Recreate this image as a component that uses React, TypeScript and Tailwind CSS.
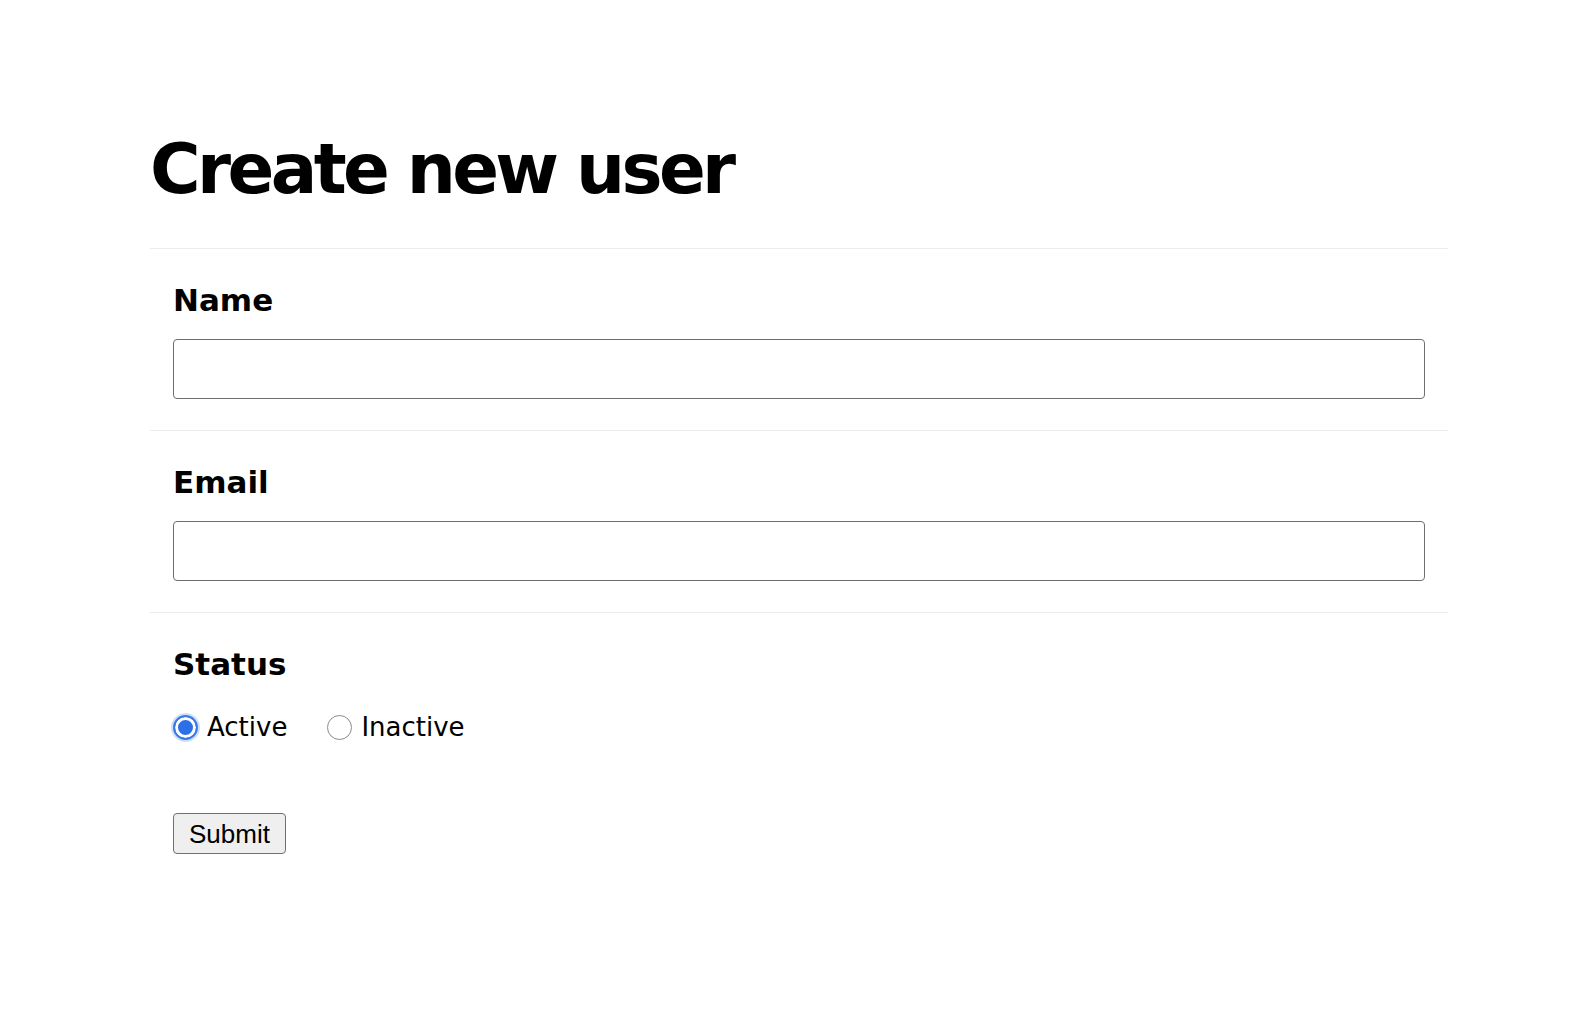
import React, { useState } from 'react';

const font = "font-['DejaVu_Sans','Verdana',sans-serif]";

const Field = ({ label, id }: { label: string; id: string }) => (
  <div className="border-t border-[#ececec] px-[23px] pt-[32px] pb-[31px]">
    <label htmlFor={id} className="block text-[31px] leading-[38px] font-bold text-black">
      {label}
    </label>
    <input
      id={id}
      type="text"
      className="mt-[20px] block w-full h-[60px] rounded-[4px] border-[1.5px] border-[#6e6e6e] bg-white px-3 text-[24px] outline-none"
    />
  </div>
);

export default function App() {
  const [status, setStatus] = useState('active');

  return (
    <div className={`min-h-screen bg-white text-black ${font}`}>
      <form className="ml-[150px] w-[1298px] pt-[129px]" onSubmit={(e) => e.preventDefault()}>
        <h1 className="text-[69px] leading-[80px] font-bold tracking-[-3.6px] mb-[39px]">Create new user</h1>

        <Field label="Name" id="name" />
        <Field label="Email" id="email" />

        {/* status */}
        <div className="border-t border-[#ececec] px-[23px] pt-[32px]">
          <div className="text-[31px] leading-[38px] font-bold">Status</div>
          <div className="mt-[28px] flex items-center gap-[40px] text-[26px] leading-[32px]">
            {[
              ['active', 'Active'],
              ['inactive', 'Inactive'],
            ].map(([v, l]) => (
              <label key={v} className="flex items-center gap-[9px]">
                <input
                  type="radio"
                  name="status"
                  checked={status === v}
                  onChange={() => setStatus(v)}
                  className="appearance-none w-[25px] h-[25px] rounded-full border border-[#8a8a8a] bg-white checked:border-[2px] checked:border-[#3b7ae8] checked:bg-[#2d6fe6] checked:shadow-[inset_0_0_0_3px_white,0_0_0_2px_#cfe0fb]"
                />
                <span>{l}</span>
              </label>
            ))}
          </div>
          <button
            type="submit"
            className="mt-[70px] h-[41px] px-[15px] rounded-[4px] border-[1.5px] border-[#707070] bg-[#efefef] text-[26px] leading-none font-['Liberation_Sans',Arial,sans-serif] text-black"
          >
            Submit
          </button>
        </div>
      </form>
    </div>
  );
}
